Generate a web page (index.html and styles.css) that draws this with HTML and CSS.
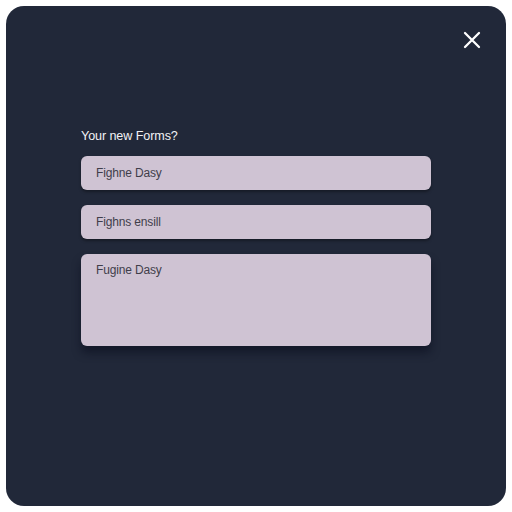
FILE: index.html
```html
<!DOCTYPE html>
<html>
<head>
<meta charset="utf-8">
<link rel="stylesheet" href="styles.css">
</head>
<body>
<div class="panel">
  <div class="topbar">
    <svg class="close" width="18" height="18" viewBox="0 0 18 18"><path d="M2 2 L16 16 M16 2 L2 16" stroke="#ffffff" stroke-width="2.3" stroke-linecap="round"/></svg>
  </div>
  <div class="form">
    <div class="label">Your new Forms?</div>
    <div class="field">Fighne Dasy</div>
    <div class="field">Fighns ensill</div>
    <div class="field area">Fugine Dasy</div>
  </div>
</div>
</body>
</html>
```
FILE: styles.css
```css
html, body { margin: 0; padding: 0; background: #ffffff; }
body { padding: 6px; width: 500px; height: 500px; font-family: "Liberation Sans", Arial, sans-serif; }
.panel {
  width: 500px; height: 500px; box-sizing: border-box;
  background: #212839; border-radius: 18px;
  display: flex; flex-direction: column;
}
.topbar { display: flex; justify-content: flex-end; padding: 25px 25px 0 0; height: 18px; }
.close { display: block; }
.form { display: flex; flex-direction: column; padding: 78px 75px 0 75px; }
.label { color: #f2f2f5; font-size: 12.6px; line-height: 18px; margin-bottom: 11px; letter-spacing: -0.1px; }
.field {
  background: #cfc3d3; border-radius: 6px; height: 34px; box-sizing: border-box;
  padding: 0 15px; display: flex; align-items: center;
  color: #3f3e4a; font-size: 12px; margin-bottom: 15px; letter-spacing: -0.15px;
  box-shadow: 0 2px 3px rgba(0,0,0,0.35);
}
.field.area { height: 92px; align-items: flex-start; padding-top: 9px; margin-bottom: 0; box-shadow: 0 7px 8px rgba(10,12,30,0.55); }
```
